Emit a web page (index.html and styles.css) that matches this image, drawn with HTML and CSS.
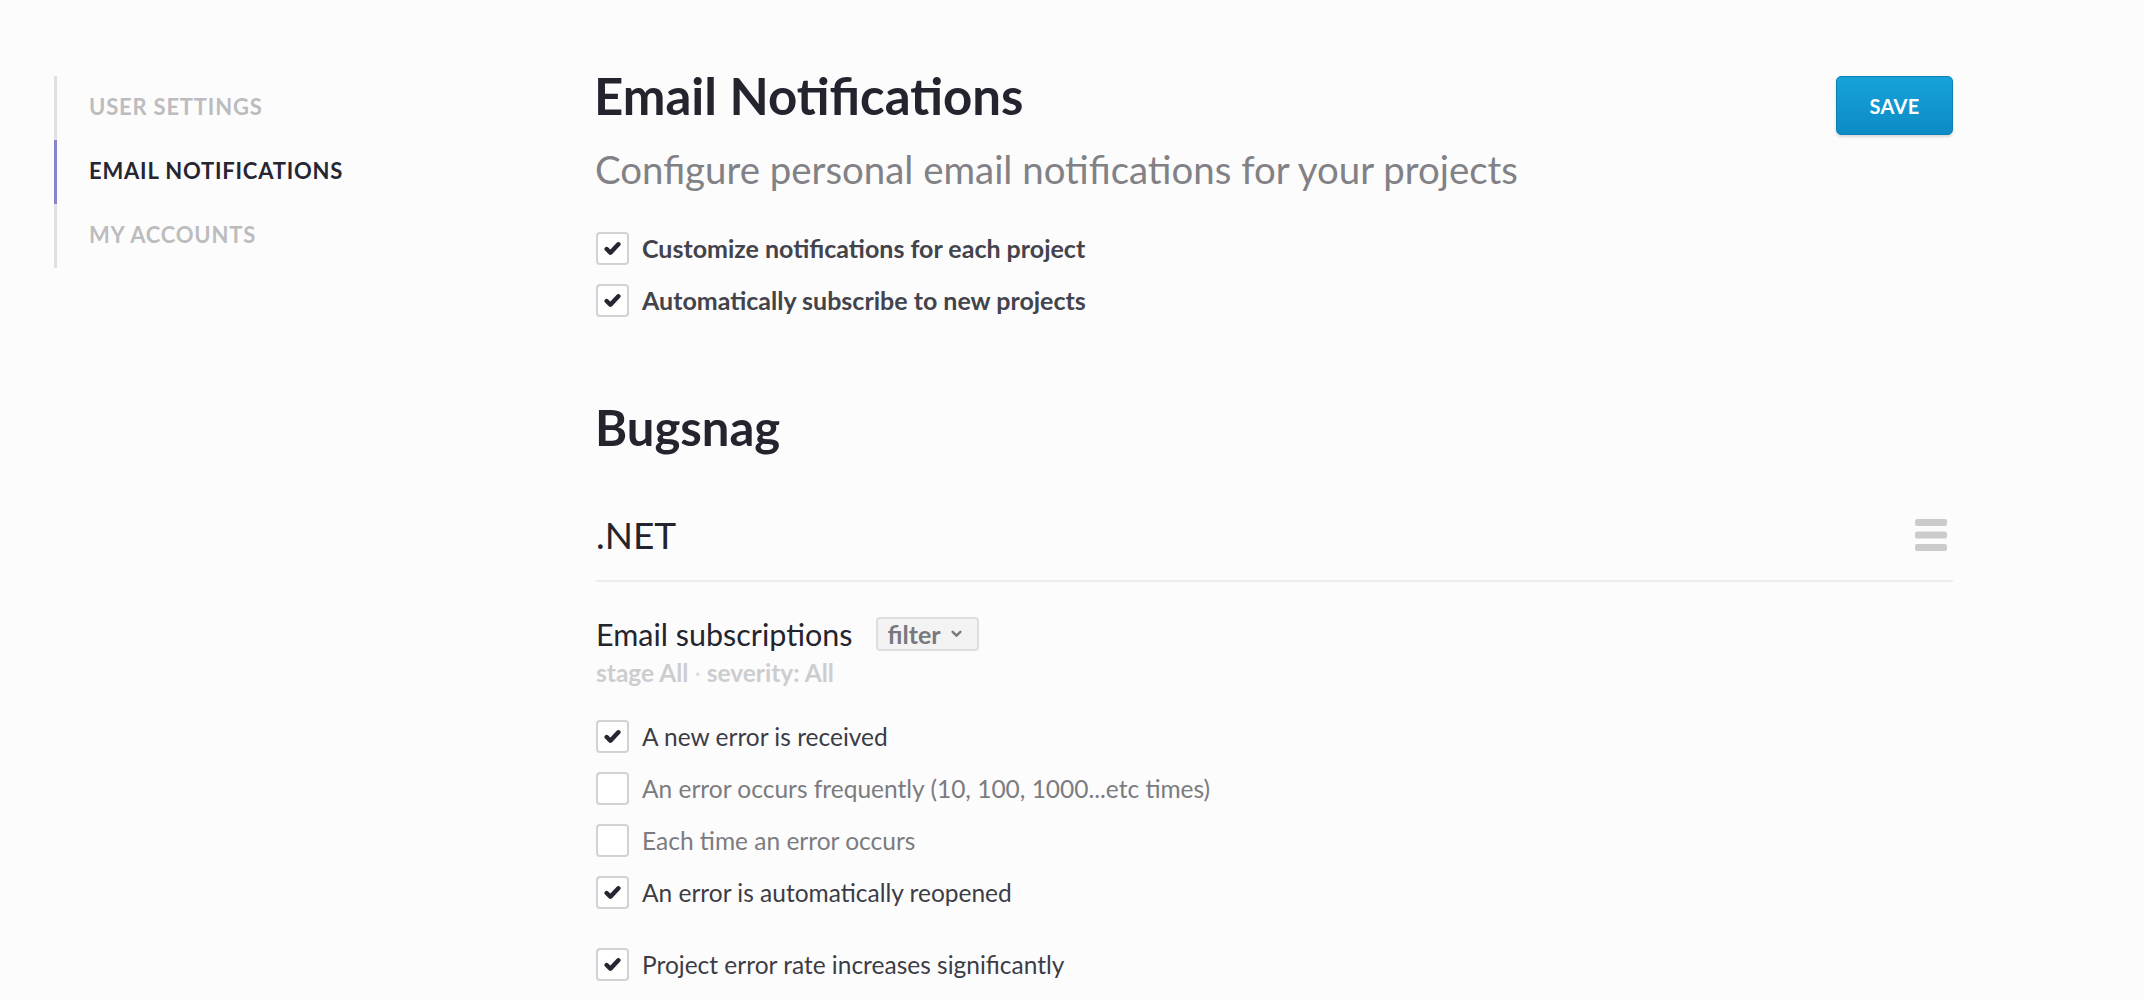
FILE: index.html
```html
<!DOCTYPE html>
<html lang="en">
<head>
<meta charset="utf-8">
<title>Email Notifications</title>
<link rel="stylesheet" href="styles.css">
</head>
<body>
<div class="page">
  <nav class="sidenav">
    <a class="nav-item">USER SETTINGS</a>
    <a class="nav-item active">EMAIL NOTIFICATIONS</a>
    <a class="nav-item">MY ACCOUNTS</a>
  </nav>
  <main class="content">
    <header class="head">
      <div class="head-text">
        <h1 class="title">Email Notifications</h1>
        <p class="subtitle">Configure personal email notifications for your projects</p>
      </div>
      <button class="save">SAVE</button>
    </header>

    <ul class="opts">
      <li class="opt strong"><span class="box on"><svg viewBox="0 0 16 14" class="tick"><path d="M2.5 7.5 L6 11 L13.5 3"/></svg></span><span class="label">Customize notifications for each project</span></li>
      <li class="opt strong"><span class="box on"><svg viewBox="0 0 16 14" class="tick"><path d="M2.5 7.5 L6 11 L13.5 3"/></svg></span><span class="label">Automatically subscribe to new projects</span></li>
    </ul>

    <h2 class="org">Bugsnag</h2>

    <div class="project-head">
      <h3 class="project">.NET</h3>
      <svg class="menu" viewBox="0 0 32 32"><rect x="0" y="0" width="32" height="7" rx="2"/><rect x="0" y="12.5" width="32" height="7" rx="2"/><rect x="0" y="25" width="32" height="7" rx="2"/></svg>
    </div>

    <div class="subs-head">
      <span class="subs-title">Email subscriptions</span>
      <button class="filter">filter <svg class="chev" viewBox="0 0 10 7"><path d="M1.5 1.5 L5 5 L8.5 1.5"/></svg></button>
    </div>
    <div class="meta">stage All <span class="dot">·</span> severity: All</div>

    <ul class="opts list">
      <li class="opt"><span class="box on"><svg viewBox="0 0 16 14" class="tick"><path d="M2.5 7.5 L6 11 L13.5 3"/></svg></span><span class="label">A new error is received</span></li>
      <li class="opt off"><span class="box"></span><span class="label">An error occurs frequently (10, 100, 1000...etc times)</span></li>
      <li class="opt off"><span class="box"></span><span class="label">Each time an error occurs</span></li>
      <li class="opt"><span class="box on"><svg viewBox="0 0 16 14" class="tick"><path d="M2.5 7.5 L6 11 L13.5 3"/></svg></span><span class="label">An error is automatically reopened</span></li>
    </ul>
    <ul class="opts list second">
      <li class="opt"><span class="box on"><svg viewBox="0 0 16 14" class="tick"><path d="M2.5 7.5 L6 11 L13.5 3"/></svg></span><span class="label">Project error rate increases significantly</span></li>
      <li class="opt off"><span class="box"></span><span class="label">Project error rate spikes</span></li>
    </ul>
  </main>
</div>
</body>
</html>
```

FILE: styles.css
```css
* { box-sizing: border-box; }
html, body { margin: 0; padding: 0; }
body {
  background: #fcfcfc;
  font-family: "Lato", "Open Sans", "Liberation Sans", sans-serif;
  color: #25252f;
  overflow: hidden;
  height: 1000px;
}
.page {
  display: flex;
  align-items: flex-start;
  padding: 60px 0 0 54px;
}
.sidenav {
  width: 542px;
  flex: none;
  margin-top: 16px;
  display: flex;
  flex-direction: column;
  border-left: 3px solid #e0e0e0;
}
.nav-item {
  display: block;
  height: 64px;
  line-height: 61px;
  padding-left: 32px;
  margin-left: -3px;
  border-left: 3px solid transparent;
  font-size: 22px;
  font-weight: 700;
  letter-spacing: 0.8px;
  color: #bcbcbf;
}
.nav-item.active {
  color: #262633;
  border-left-color: #8787c9;
}
.content {
  width: 1357px;
  flex: none;
}
.head {
  display: flex;
  justify-content: space-between;
  align-items: flex-start;
}
.title {
  margin: 6px 0 0 -2px;
  font-size: 51px;
  line-height: 60px;
  font-weight: 700;
  color: #24242e;
}
.subtitle {
  margin: 20px 0 0 -1px;
  font-size: 38.4px;
  line-height: 46px;
  color: #818186;
}
.save {
  margin-top: 16px;
  width: 117px;
  height: 59px;
  border: 1px solid #0c80b7;
  border-radius: 5px;
  background: linear-gradient(#16a2da, #0d8bc5);
  box-shadow: 0 2px 3px rgba(0,0,0,0.15);
  color: #fff;
  font-family: "Lato", sans-serif;
  font-weight: 700;
  font-size: 20px;
  letter-spacing: 0.3px;
  padding: 0;
}
.opts {
  list-style: none;
  margin: 30px 0 0;
  padding: 0;
}
.opt {
  display: flex;
  align-items: center;
  height: 52px;
  gap: 13px;
  font-size: 24.5px;
  color: #3c3c46;
}
.opt.strong { font-weight: 700; font-size: 25px; color: #43434c; }
.opt.off { color: #7b7b80; }
.box {
  width: 33px;
  height: 33px;
  flex: none;
  border: 2px solid #d2d2d4;
  border-radius: 4px;
  background: #fff;
  display: flex;
  align-items: center;
  justify-content: center;
}
.tick {
  width: 17px;
  height: 15px;
  fill: none;
  stroke: #262633;
  stroke-width: 4.2;
  stroke-linecap: round;
  stroke-linejoin: round;
}
.org {
  margin: 72px 0 0 -1px;
  font-size: 49px;
  line-height: 58px;
  font-weight: 700;
  color: #24242e;
}
.project-head {
  margin-top: 55px;
  display: flex;
  justify-content: space-between;
  align-items: center;
  padding-bottom: 21px;
  border-bottom: 2px solid #ededed;
}
.project {
  margin: 0;
  font-size: 37px;
  line-height: 48px;
  font-weight: 400;
  color: #24242e;
}
.menu {
  width: 32px;
  height: 32px;
  margin-right: 6px;
  fill: #cbcbcb;
}
.subs-head {
  margin-top: 35px;
  display: flex;
  align-items: center;
  height: 34px;
}
.subs-title {
  font-size: 30.5px;
  line-height: 34px;
  color: #24242e;
}
.filter {
  margin-left: 24px;
  height: 34px;
  width: 103px;
  padding: 0 0 0 9px;
  display: flex;
  align-items: center;
  gap: 10px;
  border: 2px solid #dedede;
  border-radius: 4px;
  background: #f3f3f3;
  color: #78787d;
  font-family: "Lato", sans-serif;
  font-weight: 700;
  font-size: 25px;
}
.chev {
  width: 11px;
  height: 8px;
  fill: none;
  stroke: #78787d;
  stroke-width: 2.2;
  stroke-linecap: round;
  stroke-linejoin: round;
}
.meta {
  margin-top: 7px;
  font-size: 24.5px;
  line-height: 30px;
  font-weight: 700;
  color: #cdcdd0;
}
.dot { font-weight: 400; color: #dedee0; }
.opts.list { margin-top: 22px; }
.opts.list.second { margin-top: 20px; }
```
